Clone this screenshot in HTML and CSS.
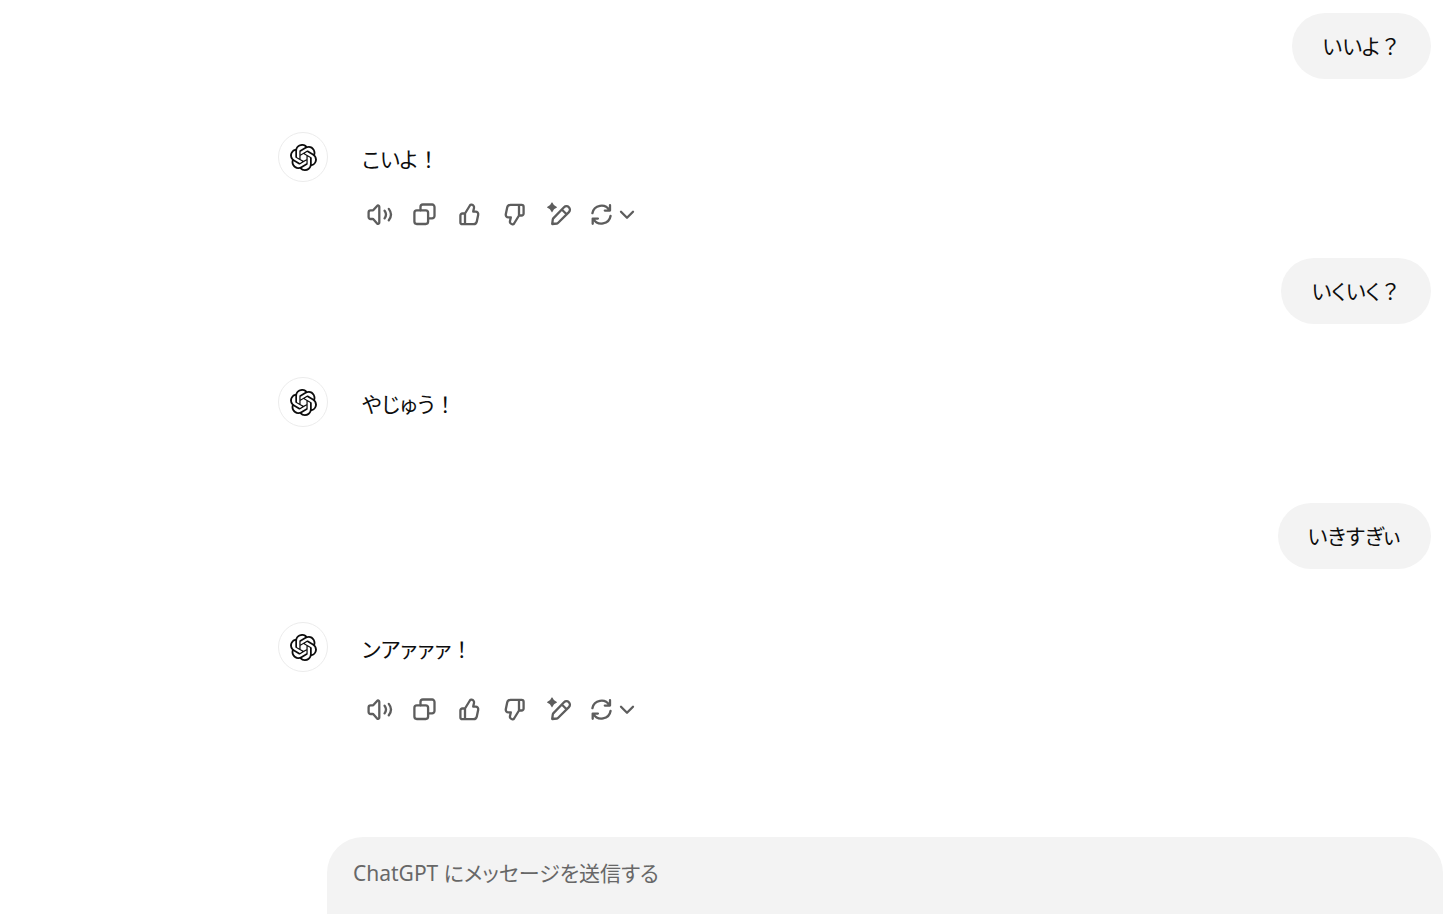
FILE: index.html
```html
<!DOCTYPE html>
<html lang="ja">
<head>
<meta charset="utf-8">
<meta name="viewport" content="width=device-width, initial-scale=1">
<title>ChatGPT</title>
<link rel="stylesheet" href="styles.css">
</head>
<body>
<svg class="sprite" aria-hidden="true">
  <symbol id="logo" viewBox="0 0 24 24"><path fill="currentColor" d="M22.2819 9.8211a5.9847 5.9847 0 0 0-.5157-4.9108 6.0462 6.0462 0 0 0-6.5098-2.9A6.0651 6.0651 0 0 0 4.9807 4.1818a5.9847 5.9847 0 0 0-3.9977 2.9 6.0462 6.0462 0 0 0 .7427 7.0966 5.98 5.98 0 0 0 .511 4.9107 6.051 6.051 0 0 0 6.5146 2.9001A5.9847 5.9847 0 0 0 13.2599 24a6.0557 6.0557 0 0 0 5.7718-4.2058 5.9894 5.9894 0 0 0 3.9977-2.9001 6.0557 6.0557 0 0 0-.7475-7.0729zm-9.022 12.6081a4.4755 4.4755 0 0 1-2.8764-1.0408l.1419-.0804 4.7783-2.7582a.7948.7948 0 0 0 .3927-.6813v-6.7369l2.02 1.1686a.071.071 0 0 1 .038.052v5.5826a4.504 4.504 0 0 1-4.4945 4.4944zm-9.6607-4.1254a4.4708 4.4708 0 0 1-.5346-3.0137l.142.0852 4.783 2.7582a.7712.7712 0 0 0 .7806 0l5.8428-3.3685v2.3324a.0804.0804 0 0 1-.0332.0615L9.74 19.9502a4.4992 4.4992 0 0 1-6.1408-1.6464zM2.3408 7.8956a4.485 4.485 0 0 1 2.3655-1.9728V11.6a.7664.7664 0 0 0 .3879.6765l5.8144 3.3543-2.0201 1.1685a.0757.0757 0 0 1-.071 0l-4.8303-2.7865A4.504 4.504 0 0 1 2.3408 7.872zm16.5963 3.8558L13.1038 8.364 15.1192 7.2a.0757.0757 0 0 1 .071 0l4.8303 2.7913a4.4944 4.4944 0 0 1-.6765 8.1042v-5.6772a.79.79 0 0 0-.407-.667zm2.0107-3.0231l-.142-.0852-4.7735-2.7818a.7759.7759 0 0 0-.7854 0L9.409 9.2297V6.8974a.0662.0662 0 0 1 .0284-.0615l4.8303-2.7866a4.4992 4.4992 0 0 1 6.6802 4.66zM8.3065 12.863l-2.02-1.1638a.0804.0804 0 0 1-.038-.0567V6.0742a4.4992 4.4992 0 0 1 7.3757-3.4537l-.142.0805L8.704 5.459a.7948.7948 0 0 0-.3927.6813zm1.0976-2.3654l2.602-1.4998 2.6069 1.4998v2.9994l-2.5974 1.4997-2.6067-1.4997Z"/></symbol>
  <symbol id="speaker" viewBox="0 0 27 27"><path d="M2.600 11.400a2.100 2.100 0 0 1 2.100-2.100h1.900c.4 0 .8-.2 1-.5l3.500-3.900c.8-.9 2.200-.3 2.200.9v15.700c0 1.200-1.400 1.800-2.200.9l-3.500-3.900c-.2-.3-.6-.5-1-.5H4.700A2.100 2.100 0 0 1 2.600 15.900zM18.600 9.800q2.800 3.800 0 7.600M22.800 7.900q4.400 5.700 0 11.400"/></symbol>
  <symbol id="copy" viewBox="0 0 27 27"><rect x="3.400" y="9.300" width="13.700" height="13.700" rx="2.400"/><path d="M9.500 9.300V5.900a2.400 2.400 0 0 1 2.400-2.400h9.200a2.400 2.400 0 0 1 2.400 2.400v9a2.400 2.400 0 0 1-2.400 2.400H17.100"/></symbol>
  <symbol id="thumb" viewBox="0 0 27 27"><path d="M9 12.500l4.900-8c.4-.6 1-.9 1.700-.8 1.700.3 2.800 1.600 2.400 3.300l-.8 3.600h2.400a2.600 2.600 0 0 1 2.600 3.100l-1.400 6.800a3.400 3.400 0 0 1-3.300 2.700H6.400a2 2 0 0 1-2-2v-6.700a2 2 0 0 1 2-2zV23.200"/></symbol>
  <symbol id="edit" viewBox="0 0 27 27"><path class="solid" d="M6 1.300q.3 0 .5.500 1.100 3 4 4 .5.200.5.500t-.5.500q-2.900 1-4 4-.2.500-.5.500t-.5-.5q-1.100-3-4-4-.5-.2-.5-.5t.5-.5q2.900-1 4-4 .2-.5.500-.5z"/><path d="M6.200 23l.6-4.600c.1-.5.3-.9.700-1.300L18 6.200a3.450 3.450 0 0 1 4.900 4.900L12.200 21.800c-.4.4-.8.600-1.300.7zM15.800 8.500l4.800 4.800"/></symbol>
  <symbol id="refresh" viewBox="0 0 27 27"><path d="M4.400 12.200A9.200 9.200 0 0 1 21.400 9.300M22 4.200v5.400h-5.200M22.600 14.800A9.200 9.200 0 0 1 5.400 17.700M4.700 22.800v-5.200h5.200"/></symbol>
  <symbol id="chevron" viewBox="0 0 16 27"><path d="M2 10.800l6 6 6-6"/></symbol>
</svg>

<main class="chat">
  <article class="user"><p class="bubble">いいよ<span class="full">？</span></p></article>
  <article class="assistant">
    <div class="avatar"><svg><use href="#logo"/></svg></div>
    <div class="reply">
      <p>こいよ<span class="full">！</span></p>
      <div class="actions">
        <button aria-label="読み上げる"><svg><use href="#speaker"/></svg></button>
        <button aria-label="コピーする"><svg><use href="#copy"/></svg></button>
        <button aria-label="よい回答です"><svg><use href="#thumb"/></svg></button>
        <button aria-label="よくない回答です"><svg class="flip"><use href="#thumb"/></svg></button>
        <button aria-label="編集する"><svg><use href="#edit"/></svg></button>
        <button class="model" aria-label="モデルを切り替える"><svg><use href="#refresh"/></svg><svg class="chevron"><use href="#chevron"/></svg></button>
      </div>
    </div>
  </article>

  <article class="user"><p class="bubble">いくいく<span class="full">？</span></p></article>
  <article class="assistant">
    <div class="avatar"><svg><use href="#logo"/></svg></div>
    <div class="reply"><p>やじゅう<span class="full">！</span></p></div>
  </article>

  <article class="user"><p class="bubble">いきすぎぃ</p></article>
  <article class="assistant latest">
    <div class="avatar"><svg><use href="#logo"/></svg></div>
    <div class="reply">
      <p>ンアァァァ<span class="full">！</span></p>
      <div class="actions">
        <button aria-label="読み上げる"><svg><use href="#speaker"/></svg></button>
        <button aria-label="コピーする"><svg><use href="#copy"/></svg></button>
        <button aria-label="よい回答です"><svg><use href="#thumb"/></svg></button>
        <button aria-label="よくない回答です"><svg class="flip"><use href="#thumb"/></svg></button>
        <button aria-label="編集する"><svg><use href="#edit"/></svg></button>
        <button class="model" aria-label="モデルを切り替える"><svg><use href="#refresh"/></svg><svg class="chevron"><use href="#chevron"/></svg></button>
      </div>
    </div>
  </article>
</main>

<form class="composer">
  <input type="text" aria-label="メッセージ" placeholder="ChatGPT にメッセージを送信する">
</form>
</body>
</html>
```

FILE: styles.css
```css
* { box-sizing: border-box; }

body {
  display: flex;
  flex-direction: column;
  min-height: 100vh;
  margin: 0;
  background: #fff;
  color: #0d0d0d;
  font: 21px/36px "Noto Sans", "Noto Sans CJK JP", sans-serif;
  font-feature-settings: "palt";
}

p { margin: 0; }

.sprite { position: absolute; width: 0; height: 0; }

.chat { padding: 13px 23px 0 278px; }

.user {
  display: flex;
  justify-content: flex-end;
}

.bubble {
  padding: 15px 30px;
  border-radius: 33px;
  background: #f3f3f3;
}

/* Closing marks keep their full-width cell. */
.full { font-feature-settings: normal; }

.assistant {
  display: flex;
  gap: 34px;
  min-height: 126px;
  margin-top: 53px;
}

.avatar {
  display: grid;
  place-items: center;
  flex: none;
  width: 50px;
  height: 50px;
  border: 1px solid #ececec;
  border-radius: 50%;
}

.avatar svg { width: 27px; height: 27px; }

.reply { padding-top: 9px; }

.actions {
  display: flex;
  margin: 15px 0 0 -5px;
}

.latest .actions { margin-top: 20px; }

.actions button {
  display: flex;
  align-items: center;
  justify-content: center;
  width: 45px;
  height: 45px;
  padding: 0;
  border: 0;
  background: none;
  color: #5d5d5d;
  cursor: pointer;
}

.actions .model { width: 59px; gap: 4px; }

.actions svg {
  flex: none;
  width: 27px;
  height: 27px;
  fill: none;
  stroke: currentColor;
  stroke-width: 2.3;
  stroke-linecap: round;
  stroke-linejoin: round;
}

.actions .chevron { width: 16px; }
.flip { transform: rotate(180deg); }
.actions .solid,
.solid { fill: currentColor; stroke: none; }

.composer {
  margin: auto 11px 0 327px;
  padding: 18px 26px 23px;
  border-radius: 36px 36px 0 0;
  background: #f3f3f3;
}

.composer input {
  display: block;
  width: 100%;
  height: 36px;
  padding: 0;
  border: 0;
  outline: 0;
  background: none;
  color: inherit;
  font: inherit;
  font-feature-settings: inherit;
}

.composer input::placeholder { color: #676767; opacity: 1; }
```
